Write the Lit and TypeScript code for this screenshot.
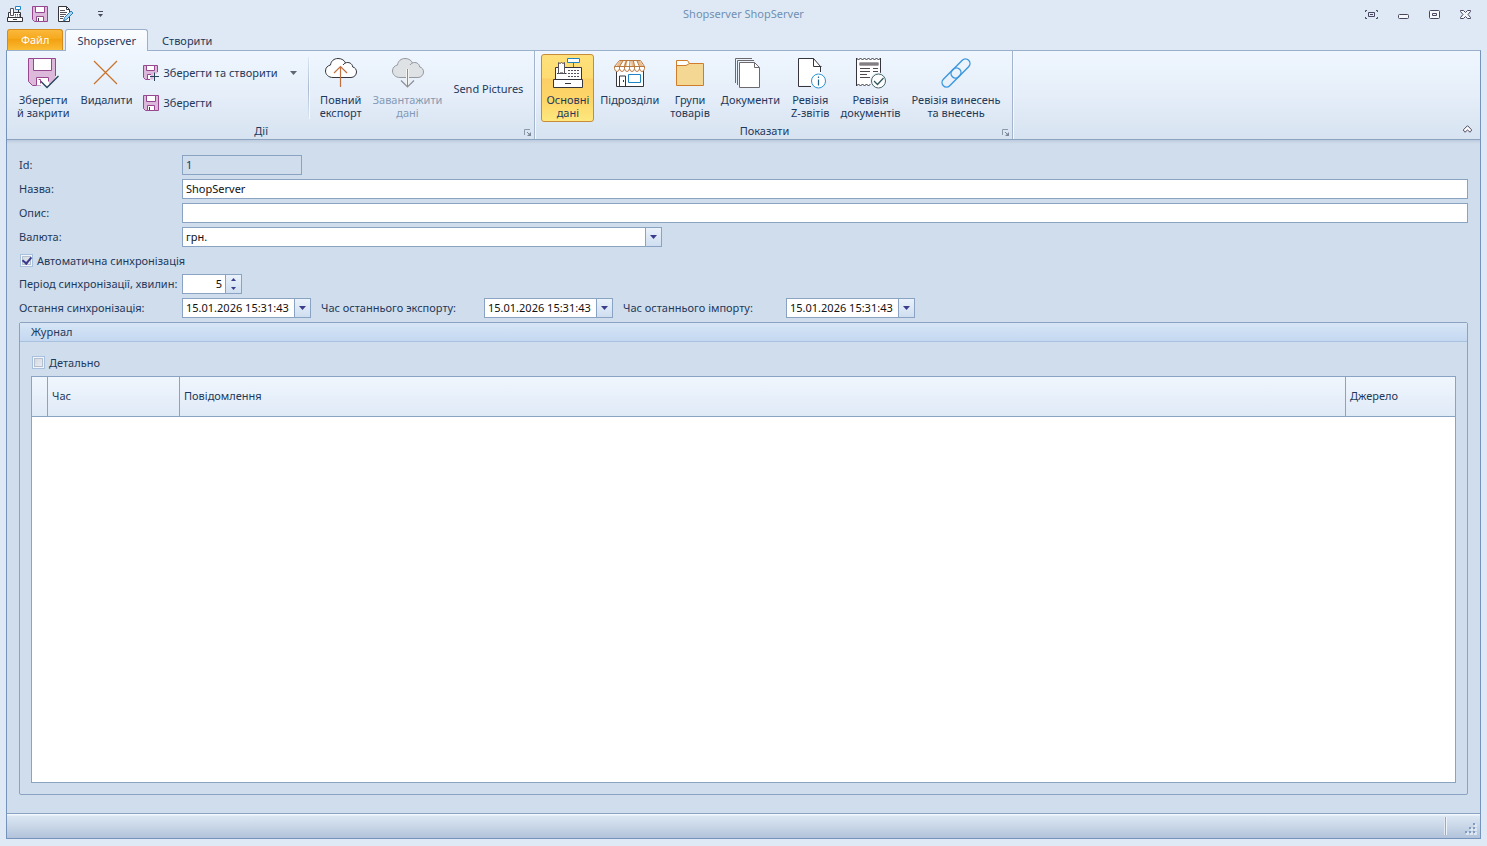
import { LitElement, html, svg, css, nothing, TemplateResult, SVGTemplateResult } from "lit";
import { customElement, property, state } from "lit/decorators.js";
import { classMap } from "lit/directives/class-map.js";

const floppy = svg`
  <path d="M.5 .5h15v15h-13l-2-2z" fill="#dcb9da" stroke="#97468f"/>
  <path d="M3.5 .5h9v6h-9z" fill="#fff" stroke="#97468f"/>
  <path d="M4.5 10.5h7v5h-7z" fill="#fff" stroke="#97468f"/>
  <path d="M6.5 12v3" stroke="#3f3c52"/>`;

const register = svg`
  <path d="M3.500 10.500h26v12h-26z" fill="#fff" stroke="#35353d"/>
  <path d="M1.500 22.500h29v8h-29z" fill="#fff" stroke="#35353d"/>
  <path d="M13 26.500h6" stroke="#35353d"/>
  <path d="M5 16.500h9.500" stroke="#35353d"/>
  <path d="M6.500 16.500v-11l1.500 1 1.500-1 1.500 1 1.500-1v11z" fill="#fff" stroke="#56525c"/>
  <path d="M8 15.500h3" stroke="#999"/>
  <path d="M16 13.500h12M16 16.500h12M16 19.500h12" stroke="#56525c" stroke-dasharray="2 1"/>
  <path d="M21.500 6v4" stroke="#1e84c4"/>
  <path d="M15.500 1.500h12v4h-12z" fill="#fff" stroke="#1e84c4"/>`;

const cloud = "M8 20.500C3.500 20.500 .5 17.500 .5 14S3 8.500 5.500 8C6 4 9 1.500 13 1.500c4 0 6.500 2 7.500 4.500 3-1.500 7 .5 7.200 4 2.500.5 3.800 2.500 3.800 5 0 3-2.500 5.500-5.500 5.500z";

const icons: Record<string, { size: number; art: SVGTemplateResult }> = {
  floppy: { size: 16, art: floppy },
  floppyPlus: {
    size: 16,
    art: svg`
      <path d="M.5 .5h14v8h-4v6h-8l-2-2z" fill="#dcb9da"/>
      <path d="M14.500 7V.5H.5v12l2 2H7" fill="none" stroke="#97468f"/>
      <path d="M3.500 .5h8v5h-8z" fill="#fff" stroke="#97468f"/>
      <path d="M8 9.500H4.500v5H7" fill="#fff" stroke="#97468f"/>
      <path d="M11.500 7.500v8.500M7 11.500h9" stroke="#24445c"/>`,
  },
  saveClose: {
    size: 32,
    art: svg`
      <path d="M1.500 1.500h27v27h-23l-4-4z" fill="#dcb9da"/>
      <path d="M28.500 19V1.500h-27v23l4 4H14" fill="none" stroke="#97468f"/>
      <path d="M6.500 1.500h18v12h-18z" fill="#fff" stroke="#97468f"/>
      <path d="M9 28.500v-8h13v8z" fill="#fff"/>
      <path d="M9.500 28.500v-8h12v4" fill="none" stroke="#97468f"/>
      <path d="M11.500 22.500h2v4" fill="none" stroke="#97468f"/>
      <path d="M23 27v2h6V21z" fill="#e8f0fa"/>
      <path d="M14 24.500l6 6L31.500 19" fill="none" stroke="#24445c" stroke-width="1.300"/>`,
  },
  remove: { size: 32, art: svg`<path d="M4 4l23 23M27 4L4 27" stroke="#c8732c" stroke-width="1.200"/>` },
  upload: {
    size: 32,
    art: svg`
      <path d=${cloud} fill="#fff" stroke="#35353d"/>
      <path d="M20.500 6q-1.500.5-2.500 2" fill="none" stroke="#35353d"/>
      <path d="M15.500 30V9.500M9 16l6.500-6.500L22 16" fill="none" stroke="#bf7040" stroke-width="1.200"/>`,
  },
  download: {
    size: 32,
    art: svg`
      <path d=${cloud} fill="#dfe2e4" stroke="#96989f"/>
      <path d="M20.500 6q-1.500.5-2.500 2" fill="none" stroke="#96989f"/>
      <path d="M15.500 12v18" stroke="#fff" stroke-width="3"/>
      <path d="M15.500 12v18M9 23.500l6.500 6.500 6.500-6.500" fill="none" stroke="#8d8f97" stroke-width="1.200"/>`,
  },
  register: { size: 32, art: register },
  shop: {
    size: 32,
    art: svg`
      <g transform="translate(0 1)">
      <path d="M2.500 12v16.500h27V12" fill="#fff" stroke="#35353d"/>
      <path d="M5.500 28v-10h6v10" fill="#fff" stroke="#35353d"/>
      <path d="M9.500 22v2" stroke="#35353d"/>
      <path d="M14.500 16.500h12v8h-12z" fill="#fff" stroke="#1e84c4"/>
      <path d="M5.500 2.500h21l4 6v2q-.5 3-2.500 3t-2.500-3q-.5 3-2.500 3t-2.500-3q-.5 3-2.500 3t-2.500-3q-.5 3-2.500 3t-2.500-3q-.5 3-2.500 3t-2.500-3q-.5 3-2.500 3t-2.500-3v-2z" fill="#fff" stroke="#b9773f"/>
      <path d="M5.500 3h3L6 8.500H2zM11 3h2.500l-1 5.500H9.500zM17 3h2.500l1.500 5.500h-3.500zM23 3h3l3.500 5.500H26z" fill="#e9bd8d"/>
      <path d="M.5 8.500h30M9 3L5.500 8.500v2M12.500 3l-2 5.500v2M16 3l-.5 7.500M19.500 3l1 5.500v2M23 3l2.500 5.500v2" fill="none" stroke="#b9773f"/>
      </g>`,
  },
  folder: {
    size: 32,
    art: svg`
      <path d="M2.500 28.500v-25h11l2 3h14v22z" fill="#f4d793" stroke="#cf7d2b"/>
      <path d="M3 8V4h10l1.800 3L12 8.500H3z" fill="#fff"/>
      <path d="M3 8.500h9l3.500-2" fill="none" stroke="#cf7d2b"/>`,
  },
  documents: {
    size: 32,
    art: svg`
      <path d="M1.500 26V1.500H18M3.500 28V3.500H20" fill="none" stroke="#6d686e"/>
      <path d="M5.500 5.500h15l5 5v20h-20z" fill="#fff" stroke="#6d686e"/>
      <path d="M20.500 5.500v5h5" fill="none" stroke="#6d686e"/>`,
  },
  fileInfo: {
    size: 32,
    art: svg`
      <path d="M4.500 1.500h15l8 8v19h-23z" fill="#fff"/>
      <path d="M17 29.500H4.500v-28h15l7 8V15M19.500 1.500v8h8" fill="none" stroke="#35353d"/>
      <circle cx="24.500" cy="24" r="7" fill="#fff" stroke="#2a93d5"/>
      <path d="M24.500 19.500v1.500M24.500 22.500v6" stroke="#24628c" stroke-width="1.200"/>`,
  },
  receipt: {
    size: 32,
    art: svg`
      <path d="M1.500 1l2 2 2-2 2 2 2-2 2 2 2-2 2 2 2-2 2 2 2-2 2 2 2-2V28l-2-1-2 2-2-2-2 2-2-2-2 2-2-2-2 2-2-2-2 2-2-2-1 2z" fill="#fff"/>
      <path d="M1.500 29V1l2 2 2-2 2 2 2-2 2 2 2-2 2 2 2-2 2 2 2-2 2 2 2-2V16M1.500 29l2-2 2 2 2-2 2 2 2-2 2 2 2-2" fill="none" stroke="#35353d"/>
      <path d="M4.500 5.500h19v3h-19z" fill="#4f4850"/><path d="M5 7h18" stroke="#b9b3b8"/>
      <path d="M5 11.500h10M5 14.500h10M5 17.500h7M5 20.500h10M18 11.500h5M18 14.500h5" stroke="#4f4850"/>
      <circle cx="23.500" cy="24" r="8.500" fill="#e9f1fa"/>
      <circle cx="23.500" cy="24" r="7" fill="#fff" stroke="#46646c"/>
      <path d="M19 24l3.500 3.500 6-6.500" fill="none" stroke="#31565e" stroke-width="1.300"/>`,
  },
  link: {
    size: 32,
    art: svg`
      <g fill="none" stroke="#3c96dc" stroke-width="1.400">
        <rect x="-11.500" y="-4.500" width="23" height="9" rx="4.500" transform="translate(20.500 11.500) rotate(-45)" />
        <rect x="-11.500" y="-4.500" width="23" height="9" rx="4.500" transform="translate(11.500 20.500) rotate(-45)" />
      </g>`,
  },
  registerSmall: {
    size: 16,
    art: svg`
      <path d="M1.500 6.500h12v5h-12z" fill="#fff" stroke="#35353d"/>
      <path d="M.5 11.500h15v4H.5z" fill="#fff" stroke="#35353d"/>
      <path d="M6 13.500h4M11.500 4v3" stroke="#35353d"/>
      <path d="M3.500 9.500v-7h3v7z" fill="#fff" stroke="#56525c"/>
      <path d="M8 8.500h5M8 10h5" stroke="#56525c" stroke-dasharray="1 1"/>
      <path d="M8.500 .5h5v3h-5z" fill="#fff" stroke="#1e84c4"/>`,
  },
  notePen: {
    size: 16,
    art: svg`
      <path d="M1.500 .5h8l3 3v12h-11z" fill="#fff" stroke="#35353d"/>
      <path d="M9.500 .5v3h3" fill="none" stroke="#35353d"/>
      <path d="M3 4.500h5M3 6.500h7M3 8.500h6M3 10.500h4M3 12.500h3" stroke="#56525c"/>
      <path d="M6.500 15l1-3.500 6.500-6.500 2 2-6.500 6.500z" fill="#a9d4f2" stroke="#2f7fb8"/>`,
  },
};

const icon = (name: string): TemplateResult => {
  const { size, art } = icons[name];
  return html`<svg class="icon" width=${size} height=${size} viewBox="0 0 ${size} ${size}" aria-hidden="true">${art}</svg>`;
};

const arrowDown = html`<svg width="7" height="4" viewBox="0 0 7 4" aria-hidden="true"><path d="M0 0h7L3.500 4z" fill="currentColor"/></svg>`;
const stepDown = html`<svg width="5" height="3" viewBox="0 0 5 3" aria-hidden="true"><path d="M0 0h5L2.500 3z" fill="currentColor"/></svg>`;
const stepUp = html`<svg width="5" height="3" viewBox="0 0 5 3" aria-hidden="true"><path d="M0 3h5L2.500 0z" fill="currentColor"/></svg>`;
const launcher = html`<svg width="7" height="7" viewBox="0 0 7 7" aria-hidden="true"><path d="M.5 6V.5H6" fill="none" stroke="#8f98a6"/><path d="M3 3l3 3" stroke="#7d8897"/><path d="M7 3v4H3z" fill="#7d8897"/></svg>`;

const shared = css`
  * { box-sizing: border-box; }
  button, input, select { font: inherit; color: inherit; margin: 0; }
  button { border: 0; padding: 0; background: none; cursor: default; }
  svg { display: block; flex: none; }
`;

interface Command { id: string; icon?: string; lines: string[]; disabled?: boolean; }

const showCommands: Command[] = [
  { id: "main", icon: "register", lines: ["Основні", "дані"] },
  { id: "units", icon: "shop", lines: ["Підрозділи"] },
  { id: "groups", icon: "folder", lines: ["Групи", "товарів"] },
  { id: "docs", icon: "documents", lines: ["Документи"] },
  { id: "z", icon: "fileInfo", lines: ["Ревізія", "Z-звітів"] },
  { id: "docrev", icon: "receipt", lines: ["Ревізія", "документів"] },
  { id: "cash", icon: "link", lines: ["Ревізія винесень", "та внесень"] },
];

@customElement("ribbon-bar")
export class RibbonBar extends LitElement {
  @state() private view = "main";

  static styles = [shared, css`
    :host {
      display: flex;
      height: 89px;
      background: linear-gradient(#eff6fe, #e5eef9 50%, #d7e3f1);
      border-bottom: 1px solid #8ca3c0;
    }
    .group {
      display: flex;
      flex-direction: column;
      position: relative;
      padding: 3px 6px 0;
      border-right: 1px solid #a3b5cd;
      box-shadow: 1px 0 #f4f9ff;
    }
    .first { padding-left: 5px; }
    .items { display: flex; gap: 1px; height: 69px; }
    .caption { padding-right: 18px; text-align: center; line-height: 17px; }
    .launcher { position: absolute; right: 3px; bottom: 3px; }
    .big {
      display: flex;
      flex-direction: column;
      align-items: center;
      gap: 4px;
      padding: 2px 4px 0;
      border: 1px solid transparent;
      border-radius: 3px;
      line-height: 13px;
      white-space: nowrap;
    }
    .label { display: block; }
    .line { display: block; }
    .big.plain { justify-content: center; padding-top: 0; }
    .big:disabled { color: #8499b4; }
    .big.active {
      border-color: #c78b3a;
      background: linear-gradient(#fee07a, #fddc72 35%, #fccf66 36%, #fdd669 70%, #fee87e);
    }
    .stack { display: flex; flex-direction: column; padding-top: 4px; }
    .row {
      display: flex;
      align-items: center;
      gap: 5px;
      height: 30px;
      padding: 0 5px 0 4px;
      white-space: nowrap;
    }
    .drop { padding-left: 7px; color: #5d6675; }
    .rule { width: 1px; margin: 3px 5px 3px 5px; background: linear-gradient(#dbe6f3, #a9bbd1 50%, #dbe6f3); box-shadow: 1px 0 #f4f9ff; }
    .spacer { flex: 1; }
    .collapse { align-self: flex-end; padding: 0 8px 6px; }
  `];

  private big(c: Command, active = false) {
    return html`<button class=${classMap({ big: true, active, plain: !c.icon })} ?disabled=${!!c.disabled}
      @click=${() => { if (showCommands.includes(c)) this.view = c.id; }}>
      ${c.icon ? icon(c.icon) : nothing}
      <span class="label">${c.lines.map((l) => html`<span class="line">${l}</span>`)}</span>
    </button>`;
  }

  render() {
    return html`
      <section class="group first">
        <div class="items">
          ${this.big({ id: "saveClose", icon: "saveClose", lines: ["Зберегти", "й закрити"] })}
          ${this.big({ id: "remove", icon: "remove", lines: ["Видалити"] })}
          <div class="stack">
            <button class="row">${icon("floppyPlus")}<span>Зберегти та створити</span><span class="drop">${arrowDown}</span></button>
            <button class="row">${icon("floppy")}<span>Зберегти</span></button>
          </div>
          <div class="rule"></div>
          ${this.big({ id: "export", icon: "upload", lines: ["Повний", "експорт"] })}
          ${this.big({ id: "load", icon: "download", lines: ["Завантажити", "дані"], disabled: true })}
          ${this.big({ id: "pictures", lines: ["Send Pictures"] })}
        </div>
        <div class="caption">Дії</div>
        <button class="launcher" aria-label="Дії">${launcher}</button>
      </section>
      <section class="group">
        <div class="items">${showCommands.map((c) => this.big(c, c.id === this.view))}</div>
        <div class="caption">Показати</div>
        <button class="launcher" aria-label="Показати">${launcher}</button>
      </section>
      <div class="spacer"></div>
      <button class="collapse" aria-label="Згорнути">
        <svg width="9" height="8" viewBox="0 0 9 8" aria-hidden="true"><path d="M4.500 .7L8.300 4.500v1.500L7 7.200 4.500 5 2 7.200.7 6V4.500z" fill="#fff" stroke="#4a4660"/></svg>
      </button>`;
  }
}

@customElement("date-field")
export class DateField extends LitElement {
  @property() label = "";
  @property() value = "";

  static styles = [shared, css`
    :host { display: flex; align-items: center; }
    .name { width: 163px; white-space: nowrap; }
    .box { display: flex; width: 129px; height: 20px; border: 1px solid #8ba3c2; background: #fff; }
    .text { flex: 1; min-width: 0; border: 0; padding: 0 3px; outline: 0; background: none; color: #111; }
    .open { display: grid; place-items: center; width: 16px; border-left: 1px solid #8ba3c2; background: linear-gradient(#eaf2fb, #cfdef0); color: #3c3c8c; }
  `];

  render() {
    return html`
      <label class="name" for="value">${this.label}</label>
      <div class="box">
        <input class="text" id="value" .value=${this.value} />
        <button class="open" aria-label=${this.label}>${arrowDown}</button>
      </div>`;
  }
}

@customElement("app-root")
export class AppRoot extends LitElement {
  @state() private period = 5;

  static styles = [shared, css`
    :host {
      display: flex;
      flex-direction: column;
      min-height: 100vh;
      box-sizing: border-box;
      padding: 0 6px 7px;
      background: #dfe9f5;
      color: #1e395b;
      font: 11px/14px "Noto Sans", "Open Sans", sans-serif;
    }
    .titlebar { display: grid; grid-template-columns: 1fr auto 1fr; align-items: center; height: 28px; }
    .quick { display: flex; align-items: center; gap: 9px; padding-left: 1px; }
    .more { padding-left: 15px; }
    .title { color: #6f90b3; }
    .window { display: flex; justify-content: flex-end; align-items: center; gap: 20px; padding-right: 10px; }
    .tabs { display: flex; align-items: flex-end; gap: 2px; padding: 1px 0 0 1px; }
    .tab { height: 21px; padding: 0 11px; line-height: 21px; border: 1px solid transparent; border-bottom: 0; border-radius: 3px 3px 0 0; }
    .file { padding: 0 13px; line-height: 20px; border-color: #d48a1c; color: #fff; background: linear-gradient(#fbb83c, #f5a81c 45%, #f2a010 46%, #fbbc33); }
    .current { position: relative; z-index: 1; height: 22px; margin-bottom: -1px; border-color: #9bb0cb; background: linear-gradient(#fbfdff, #eff6fe); }
    .frame { flex: 1; display: flex; flex-direction: column; border: 1px solid #7694bb; border-top-color: #9bb0cb; }
    .body {
      flex: 1;
      display: flex;
      flex-direction: column;
      gap: 4px;
      padding: 15px 12px 18px;
      background: linear-gradient(#bccbde, #d0ddec 4px);
    }
    .field { display: grid; grid-template-columns: 163px 1fr; align-items: center; white-space: nowrap; }
    .input { width: 100%; height: 20px; border: 1px solid #8ba3c2; border-radius: 0; padding: 0 3px 1px; background: #fff; color: #111; outline: 0; }
    .short { width: 120px; background: #d0ddec; color: #1e395b; }
    .combo { display: grid; width: 480px; max-width: 100%; }
    .combo > * { grid-area: 1 / 1; }
    .select { appearance: none; padding: 0 3px; }
    .mark { justify-self: end; display: grid; place-items: center; width: 16px; margin: 1px; border-left: 1px solid #8ba3c2; background: linear-gradient(#eaf2fb, #cfdef0); color: #3c3c8c; pointer-events: none; }
    .check { display: flex; align-items: center; gap: 4px; height: 19px; padding-left: 1px; }
    .tick {
      appearance: none;
      display: grid;
      place-items: center;
      width: 13px;
      height: 13px;
      margin: 0;
      border: 1px solid #a7c0dd;
      background: linear-gradient(135deg, #cfd5de, #eef1f5);
      box-shadow: inset 0 0 0 1px #f2f6fb, inset 0 0 0 2px #b4bfcf;
    }
    .tick:checked::before { content: ""; width: 4px; height: 7px; margin-bottom: 2px; border: solid #3b3a8c; border-width: 0 2px 2px 0; transform: rotate(40deg); }
    .spin { display: flex; width: 60px; height: 20px; border: 1px solid #8ba3c2; background: #fff; }
    .number { appearance: textfield; flex: 1; min-width: 0; border: 0; padding: 0 3px; text-align: right; background: none; color: #111; outline: 0; }
    .number::-webkit-inner-spin-button { appearance: none; margin: 0; }
    .steps { display: flex; flex-direction: column; width: 16px; border-left: 1px solid #8ba3c2; background: linear-gradient(#eaf2fb, #cfdef0); color: #3c3c8c; }
    .step { flex: 1; display: grid; place-items: center; }
    .dates { display: flex; flex-wrap: wrap; gap: 4px 10px; }
    .journal { flex: 1; display: flex; flex-direction: column; border: 1px solid #8ba3c2; border-radius: 2px; }
    .heading { margin: 0; padding: 0 11px; font: inherit; line-height: 18px; border-bottom: 1px solid #a9c0de; background: linear-gradient(#d7e5f6, #c4d8f1); }
    .panel { flex: 1; display: flex; flex-direction: column; gap: 4px; padding: 11px; }
    .sheet { flex: 1; border: 1px solid #8ba3c2; background: #fff; }
    .grid { width: 100%; table-layout: fixed; border-collapse: separate; border-spacing: 0; }
    .grid th { height: 40px; padding: 0 4px 2px; text-align: left; font-weight: inherit; border-right: 1px solid #8ba3c2; border-bottom: 1px solid #8ba3c2; background: linear-gradient(#f0f6fd, #dfeaf7); }
    .grid th:last-child { border-right: 0; }
    .mini { width: 16px; }
    .time { width: 132px; }
    .source { width: 109px; }
    .status { display: flex; align-items: center; justify-content: flex-end; gap: 19px; height: 25px; padding-right: 3px; border-top: 1px solid #8ba3c2; background: linear-gradient(#f2f7fd 1px, #dbe6f3 2px, #c5d3e5 60%, #b1c2da); }
    .divider { width: 1px; height: 18px; background: #96abc6; box-shadow: 1px 0 #eef4fb, -1px 0 #dfe8f3; }
    .grip { align-self: flex-end; margin-bottom: 3px; }
  `];

  render() {
    return html`
      <header class="titlebar">
        <div class="quick">
          <button aria-label="Shopserver">${icon("registerSmall")}</button>
          <button aria-label="Зберегти">${icon("floppy")}</button>
          <button aria-label="Редагувати">${icon("notePen")}</button>
          <button class="more" aria-label="Ще"><svg width="7" height="7" viewBox="0 0 7 7" aria-hidden="true"><path d="M1 .5h5" stroke="#4a4b58"/><path d="M1 3h5L3.500 6z" fill="#4a4b58"/></svg></button>
        </div>
        <div class="title">Shopserver ShopServer</div>
        <div class="window">
          <button aria-label="На весь екран"><svg width="13" height="9" viewBox="0 0 13 9" fill="none" stroke="#4a4660" aria-hidden="true"><path d="M2 .5H.5V2M11 .5h1.500V2M2 8.500H.5V7M11 8.500h1.500V7M3.500 2.500h6v4h-6zM5 4.500h3"/></svg></button>
          <button aria-label="Згорнути"><svg width="11" height="9" viewBox="0 0 11 9" fill="#f4f8fd" stroke="#4a4660" aria-hidden="true"><rect x=".5" y="4.500" width="10" height="4" rx="1"/></svg></button>
          <button aria-label="Розгорнути"><svg width="11" height="9" viewBox="0 0 11 9" fill="#f4f8fd" stroke="#4a4660" aria-hidden="true"><rect x=".5" y=".5" width="10" height="8" rx="1"/><path d="M3.500 3.500h4v2h-4z"/></svg></button>
          <button aria-label="Закрити"><svg width="11" height="9" viewBox="0 0 11 9" fill="#f4f8fd" stroke="#4a4660" aria-hidden="true"><path d="M.5 .5h3l2 2 2-2h3v1L8 4.500l2.500 3v1h-3l-2-2-2 2h-3v-1L3 4.500.5 1.500z"/></svg></button>
        </div>
      </header>
      <nav class="tabs">
        <button class="tab file">Файл</button>
        <button class="tab current">Shopserver</button>
        <button class="tab">Створити</button>
      </nav>
      <div class="frame">
        <ribbon-bar></ribbon-bar>
        <main class="body">
          <div class="field"><label for="id">Id:</label><input class="input short" id="id" value="1" readonly /></div>
          <div class="field"><label for="name">Назва:</label><input class="input" id="name" value="ShopServer" /></div>
          <div class="field"><label for="about">Опис:</label><input class="input" id="about" /></div>
          <div class="field">
            <label for="currency">Валюта:</label>
            <div class="combo">
              <select class="input select" id="currency"><option>грн.</option></select>
              <span class="mark">${arrowDown}</span>
            </div>
          </div>
          <div class="check"><input class="tick" type="checkbox" id="auto" checked /><label for="auto">Автоматична синхронізація</label></div>
          <div class="field">
            <label for="period">Період синхронізації, хвилин:</label>
            <div class="spin">
              <input class="number" id="period" type="number" .value=${String(this.period)} @change=${(e: Event) => { this.period = Number((e.target as HTMLInputElement).value); }} />
              <div class="steps">
                <button class="step" aria-label="Більше" @click=${() => { this.period += 1; }}>${stepUp}</button>
                <button class="step" aria-label="Менше" @click=${() => { this.period -= 1; }}>${stepDown}</button>
              </div>
            </div>
          </div>
          <div class="dates">
            <date-field label="Остання синхронізація:" value="15.01.2026 15:31:43"></date-field>
            <date-field label="Час останнього экспорту:" value="15.01.2026 15:31:43"></date-field>
            <date-field label="Час останнього імпорту:" value="15.01.2026 15:31:43"></date-field>
          </div>
          <section class="journal">
            <h2 class="heading">Журнал</h2>
            <div class="panel">
              <div class="check"><input class="tick" type="checkbox" id="detail" /><label for="detail">Детально</label></div>
              <div class="sheet">
                <table class="grid">
                  <thead><tr><th class="mini"></th><th class="time">Час</th><th>Повідомлення</th><th class="source">Джерело</th></tr></thead>
                </table>
              </div>
            </div>
          </section>
        </main>
        <footer class="status">
          <span class="divider"></span>
          <svg class="grip" width="12" height="12" viewBox="0 0 12 12" aria-hidden="true">
            <path d="M9 1h3v3H9zM5 5h3v3H5zM9 5h3v3H9zM1 9h3v3H1zM5 9h3v3H5zM9 9h3v3H9z" fill="#dbe6f2"/>
            <path d="M8 0h2v2H8zM4 4h2v2H4zM8 4h2v2H8zM0 8h2v2H0zM4 8h2v2H4zM8 8h2v2H8z" fill="#7f9bc0"/>
          </svg>
        </footer>
      </div>`;
  }
}
